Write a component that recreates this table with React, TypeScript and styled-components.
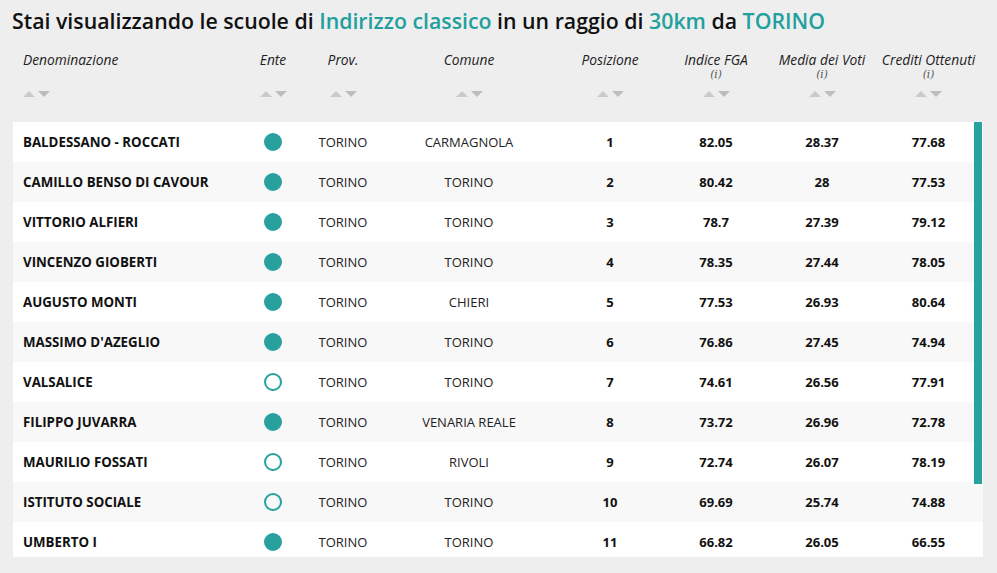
import React from "react";
import styled, { createGlobalStyle } from "styled-components";

const GlobalStyle = createGlobalStyle`
  html, body {
    margin: 0;
    padding: 0;
    background: #eeeeee;
    font-family: "Open Sans", "Liberation Sans", sans-serif;
    color: #111;
  }
`;

type School = {
  name: string;
  statale: boolean;
  prov: string;
  comune: string;
  pos: number;
  fga: string;
  media: string;
  crediti: string;
};

const SCHOOLS: School[] = [
  { name: "BALDESSANO - ROCCATI", statale: true, prov: "TORINO", comune: "CARMAGNOLA", pos: 1, fga: "82.05", media: "28.37", crediti: "77.68" },
  { name: "CAMILLO BENSO DI CAVOUR", statale: true, prov: "TORINO", comune: "TORINO", pos: 2, fga: "80.42", media: "28", crediti: "77.53" },
  { name: "VITTORIO ALFIERI", statale: true, prov: "TORINO", comune: "TORINO", pos: 3, fga: "78.7", media: "27.39", crediti: "79.12" },
  { name: "VINCENZO GIOBERTI", statale: true, prov: "TORINO", comune: "TORINO", pos: 4, fga: "78.35", media: "27.44", crediti: "78.05" },
  { name: "AUGUSTO MONTI", statale: true, prov: "TORINO", comune: "CHIERI", pos: 5, fga: "77.53", media: "26.93", crediti: "80.64" },
  { name: "MASSIMO D'AZEGLIO", statale: true, prov: "TORINO", comune: "TORINO", pos: 6, fga: "76.86", media: "27.45", crediti: "74.94" },
  { name: "VALSALICE", statale: false, prov: "TORINO", comune: "TORINO", pos: 7, fga: "74.61", media: "26.56", crediti: "77.91" },
  { name: "FILIPPO JUVARRA", statale: true, prov: "TORINO", comune: "VENARIA REALE", pos: 8, fga: "73.72", media: "26.96", crediti: "72.78" },
  { name: "MAURILIO FOSSATI", statale: false, prov: "TORINO", comune: "RIVOLI", pos: 9, fga: "72.74", media: "26.07", crediti: "78.19" },
  { name: "ISTITUTO SOCIALE", statale: false, prov: "TORINO", comune: "TORINO", pos: 10, fga: "69.69", media: "25.74", crediti: "74.88" },
  { name: "UMBERTO I", statale: true, prov: "TORINO", comune: "TORINO", pos: 11, fga: "66.82", media: "26.05", crediti: "66.55" },
];

const COLUMNS = [
  { label: "Denominazione", info: false },
  { label: "Ente", info: false },
  { label: "Prov.", info: false },
  { label: "Comune", info: false },
  { label: "Posizione", info: false },
  { label: "Indice FGA", info: true },
  { label: "Media dei Voti", info: true },
  { label: "Crediti Ottenuti", info: true },
];

const GRID = "227px 66px 74px 178px 104px 108px 104px 109px";

const App = () => {
  return (
    <Page>
      <GlobalStyle />
      <Title>
        Stai visualizzando le scuole di <Accent>Indirizzo classico</Accent> in un raggio di{" "}
        <Accent>30km</Accent> da <Accent>TORINO</Accent>
      </Title>

      <HeaderRow>
        {COLUMNS.map((col, i) => (
          <HeaderCell key={col.label} $left={i === 0}>
            <HeaderLabel>{col.label}</HeaderLabel>
            {col.info && <Info>(i)</Info>}
            <SortArrows>
              <ArrowUp />
              <ArrowDown />
            </SortArrows>
          </HeaderCell>
        ))}
      </HeaderRow>

      <TableBody>
        {SCHOOLS.map((s, i) => (
          <Row key={s.name} $odd={i % 2 === 1}>
            <NameCell>{s.name}</NameCell>
            <Cell>
              <Dot $filled={s.statale} />
            </Cell>
            <Cell>{s.prov}</Cell>
            <Cell>{s.comune}</Cell>
            <NumCell>{s.pos}</NumCell>
            <NumCell>{s.fga}</NumCell>
            <NumCell>{s.media}</NumCell>
            <NumCell>{s.crediti}</NumCell>
          </Row>
        ))}
        <ScrollThumb />
      </TableBody>
    </Page>
  );
};

export default App;

const Page = styled.div`
  width: 997px;
  height: 573px;
  box-sizing: border-box;
  padding: 6px 14px 0 13px;
  overflow: hidden;
`;

const Title = styled.h1`
  margin: 0 0 0 -1px;
  font-size: 21.3px;
  line-height: 30px;
  font-weight: 600;
  color: #111;
  white-space: nowrap;
`;

const Accent = styled.span`
  color: #22a09d;
`;

const HeaderRow = styled.div`
  display: grid;
  grid-template-columns: ${GRID};
  height: 86px;
`;

const HeaderCell = styled.div<{ $left?: boolean }>`
  display: flex;
  flex-direction: column;
  align-items: ${(p) => (p.$left ? "flex-start" : "center")};
  padding: 15px 0 25px ${(p) => (p.$left ? "10px" : "0")};
  box-sizing: border-box;
`;

const HeaderLabel = styled.div`
  font-style: italic;
  font-size: 13.8px;
  line-height: 18px;
  color: #222;
  white-space: nowrap;
`;

const Info = styled.div`
  font-family: "DejaVu Serif", "Liberation Serif", serif;
  font-style: italic;
  font-size: 10.5px;
  line-height: 10px;
  color: #555;
`;

const SortArrows = styled.div`
  margin-top: auto;
  display: flex;
  gap: 3px;
`;

const ArrowUp = styled.span`
  width: 0;
  height: 0;
  border-left: 6px solid transparent;
  border-right: 6px solid transparent;
  border-bottom: 6px solid #cacaca;
`;

const ArrowDown = styled.span`
  width: 0;
  height: 0;
  border-left: 6px solid transparent;
  border-right: 6px solid transparent;
  border-top: 6px solid #bdbdbd;
`;

const TableBody = styled.div`
  position: relative;
  width: 970px;
  height: 435px;
  overflow: hidden;
`;

const Row = styled.div<{ $odd: boolean }>`
  display: grid;
  grid-template-columns: ${GRID};
  height: 40px;
  align-items: center;
  background: ${(p) => (p.$odd ? "#f8f8f8" : "#ffffff")};
`;

const Cell = styled.div`
  display: flex;
  justify-content: center;
  align-items: center;
  font-size: 13px;
  color: #222;
  white-space: nowrap;
`;

const NameCell = styled(Cell)`
  justify-content: flex-start;
  padding-left: 10px;
  font-weight: 700;
  font-size: 13.3px;
  color: #111;
`;

const NumCell = styled(Cell)`
  font-weight: 700;
  color: #111;
`;

const Dot = styled.span<{ $filled: boolean }>`
  width: 18px;
  height: 18px;
  box-sizing: border-box;
  border-radius: 50%;
  border: 2px solid #28a19e;
  background: ${(p) => (p.$filled ? "#28a19e" : "transparent")};
`;

const ScrollThumb = styled.div`
  position: absolute;
  top: 0;
  right: 1px;
  width: 8px;
  height: 362px;
  background: #27a29f;
`;
